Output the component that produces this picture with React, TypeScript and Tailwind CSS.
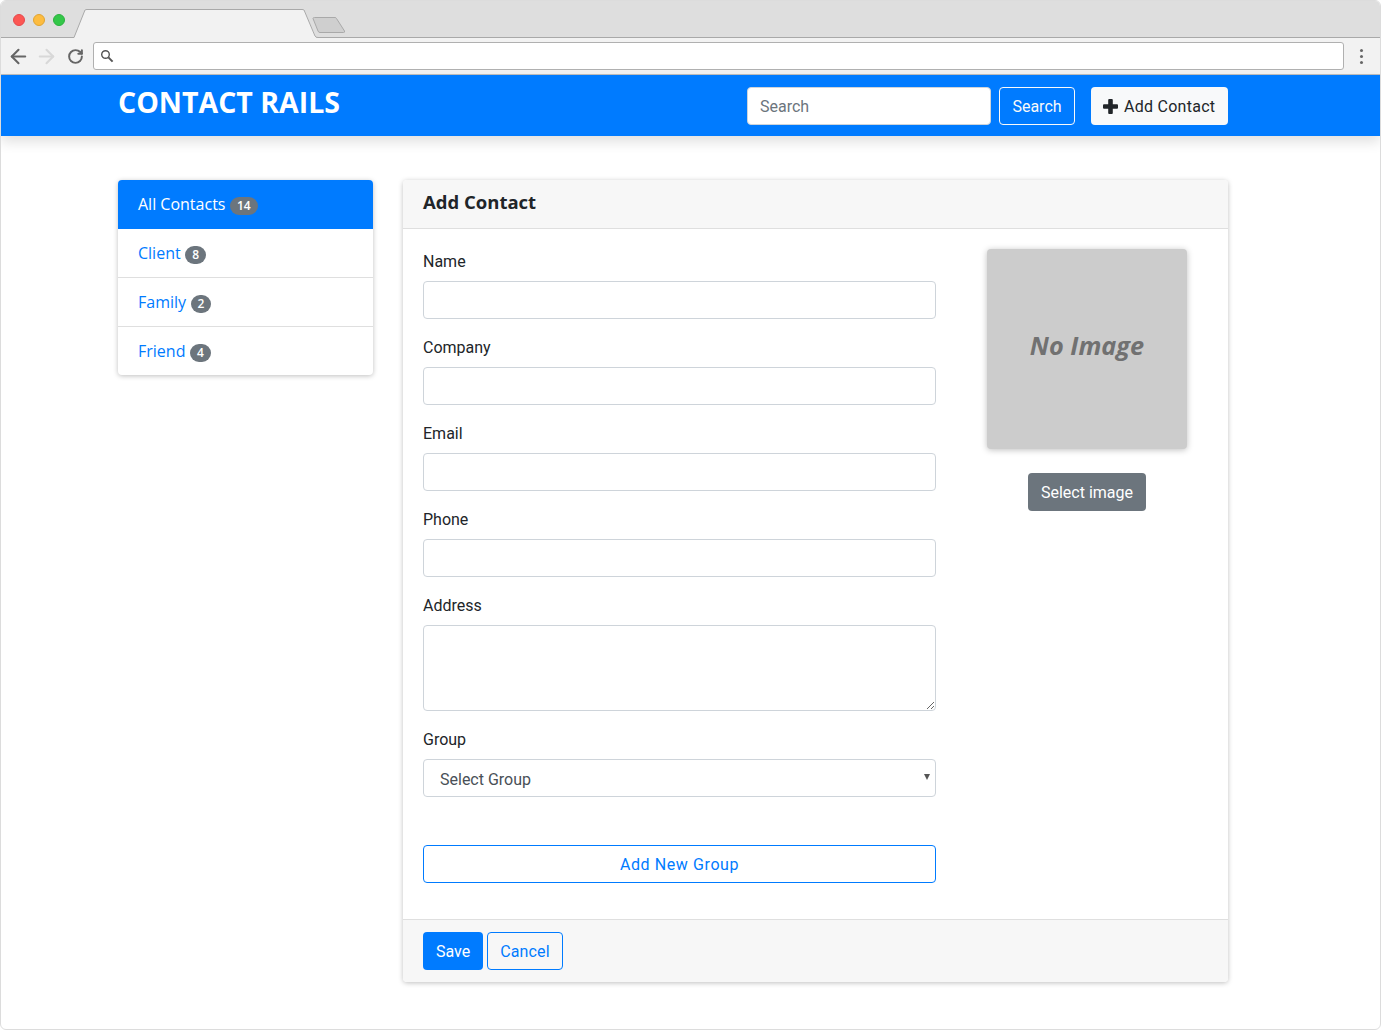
import { ArrowLeft, ArrowRight, RotateCw } from "lucide-react";

const groups = [
  { name: "Client", count: 8 },
  { name: "Family", count: 2 },
  { name: "Friend", count: 4 },
];

const fields = ["Name", "Company", "Email", "Phone"];

function Badge({ children }: { children: React.ReactNode }) {
  return (
    <span className="mt-[4px] ml-[4.5px] flex h-[18px] items-center rounded-full bg-[#6c757d] px-[7px] font-['Open_Sans',sans-serif] text-[12px] font-semibold text-white">
      {children}
    </span>
  );
}

function Label({ children }: { children: React.ReactNode }) {
  return <label className="mb-[8px] block pt-[1px] text-[16px] leading-[23px] text-[#212529]">{children}</label>;
}

function BrowserChrome() {
  return (
    <div className="shrink-0">
      <div className="relative h-[37px] border-b border-[#a9a9a9] bg-[#dedede]">
        <div className="flex gap-[8px] pt-[13px] pl-[12px]">
          <span className="size-[12px] rounded-full border border-[#e5484d] bg-[#fc5753]" />
          <span className="size-[12px] rounded-full border border-[#e0a431] bg-[#fdbc40]" />
          <span className="size-[12px] rounded-full border border-[#2bb03e] bg-[#33c748]" />
        </div>
        <svg className="absolute top-[7px] left-[71px]" width="276" height="31" viewBox="0 0 276 31" fill="none">
          <path d="M0 29.5 H2 L13 2 Q13.5 1.5 15 1.5 H230 Q231.5 1.5 232 2 L244 29.5 H246 V31 H0 Z" fill="#f2f2f2" />
          <path d="M0 29.5 H2 L13 2 Q13.5 1.5 15 1.5 H230 Q231.5 1.5 232 2 L243 28 Q244 29.5 246 29.5" stroke="#a9a9a9" />
          <path d="M241 10.5 Q241 9.5 242.5 9.5 H263 Q264 9.5 264.5 10.5 L272.5 23 Q273 24.5 271.5 24.5 H248 Q246.5 24.5 246 23 Z" fill="#cfcfcf" stroke="#a9a9a9" />
        </svg>
      </div>
      <div className="flex h-[37px] items-center border-b border-[#bdbdbd] bg-[#f2f2f2]">
        <ArrowLeft size={23} strokeWidth={2.2} className="ml-[6px] text-[#666]" />
        <ArrowRight size={23} strokeWidth={2.2} className="ml-[5px] text-[#d8d8d8]" />
        <RotateCw size={17} strokeWidth={2.8} className="ml-[9px] text-[#666]" />
        <div className="ml-[9px] flex h-[28px] w-[1251px] items-center rounded-[3px] border border-[#b0b0b0] bg-white pl-[6px]">
          <svg width="14" height="14" viewBox="0 0 14 14" fill="none" stroke="#555">
            <circle cx="5.5" cy="5.5" r="3.8" strokeWidth="1.4" />
            <path d="M8.4 8.4 L12.6 12.6" strokeWidth="2" />
          </svg>
        </div>
        <div className="ml-[16px] flex flex-col gap-[3px]">
          <span className="size-[3px] rounded-full bg-[#666]" />
          <span className="size-[3px] rounded-full bg-[#666]" />
          <span className="size-[3px] rounded-full bg-[#666]" />
        </div>
      </div>
    </div>
  );
}

function Navbar() {
  return (
    <header className="flex h-[61px] shrink-0 items-start bg-[#007bff] pr-[152px] pl-[117px] shadow-[0_6px_12px_rgba(0,0,0,0.12)]">
      <h1 className="mt-[8px] font-['Open_Sans',sans-serif] text-[28.5px] leading-[38px] font-bold text-white">
        CONTACT RAILS
      </h1>
      <div className="ml-auto flex pt-[12px]">
        <input
          placeholder="Search"
          className="h-[38px] w-[244px] rounded-[4px] border border-[#ced4da] bg-white px-[12px] text-[16px] text-[#495057] placeholder:text-[#6c757d]"
        />
        <button className="ml-[8px] h-[38px] w-[76px] rounded-[4px] border border-[#f8f9fa] pt-[1px] text-[16px] text-[#f8f9fa]">
          Search
        </button>
        <button className="ml-[16px] flex h-[38px] w-[137px] items-center rounded-[4px] bg-[#f8f9fa] pt-[1px] pl-[12px] text-[16px] tracking-[0.27px] text-[#212529]">
          <svg width="15" height="15" viewBox="0 0 15 15" className="mr-[6px]" fill="#212529">
            <rect x="5.2" y="0" width="4.6" height="15" rx="1" />
            <rect x="0" y="5.2" width="15" height="4.6" rx="1" />
          </svg>
          Add Contact
        </button>
      </div>
    </header>
  );
}

function Sidebar() {
  return (
    <aside className="h-[195px] w-[255px] shrink-0 overflow-hidden rounded-[4px] bg-white font-['Open_Sans',sans-serif] text-[16px] shadow-[0_1px_5px_rgba(0,0,0,0.25)]">
      <div className="flex h-[49px] items-center bg-[#007bff] pb-[2px] pl-[20px] text-white">
        All Contacts
        <Badge>14</Badge>
      </div>
      {groups.map((g, i) => (
        <div
          key={g.name}
          className={`flex items-center pl-[20px] text-[#007bff] ${i < 2 ? "h-[49px] border-b border-[#dfdfdf]" : "h-[48px]"}`}
        >
          {g.name}
          <Badge>{g.count}</Badge>
        </div>
      ))}
    </aside>
  );
}

function ContactForm() {
  const control = "mb-[16px] block h-[38px] w-full rounded-[4px] border border-[#ced4da] bg-white";
  return (
    <section className="ml-[30px] h-[802px] w-[825px] shrink-0 overflow-hidden rounded-[4px] bg-white shadow-[0_1px_5px_rgba(0,0,0,0.25)]">
      <div className="flex h-[49px] items-center border-b border-[#dfdfdf] bg-[#f7f7f7] pb-[5px] pl-[20px]">
        <h2 className="font-['Open_Sans',sans-serif] text-[18.5px] font-bold text-[#212529]">Add Contact</h2>
      </div>
      <div className="flex h-[691px] border-b border-[#dfdfdf] pt-[20px] pl-[20px]">
        <div className="w-[513px]">
          {fields.map((f) => (
            <div key={f}>
              <Label>{f}</Label>
              <input className={control} />
            </div>
          ))}
          <Label>Address</Label>
          <textarea className="mb-[16px] block h-[86px] w-full rounded-[4px] border border-[#ced4da] bg-white" />
          <Label>Group</Label>
          <div className="relative">
            <select className="block h-[38px] w-full appearance-none rounded-[4px] border border-[#ced4da] bg-white px-[16px] pt-[4px] text-[16px] text-[#495057]">
              <option>Select Group</option>
            </select>
            <span className="absolute top-[15px] right-[6px] size-0 border-x-[3px] border-t-[6px] border-x-transparent border-t-[#555]" />
          </div>
          <button className="mt-[48px] block h-[38px] w-full rounded-[4px] border border-[#007bff] pt-[1px] text-[16px] tracking-[0.6px] text-[#007bff]">
            Add New Group
          </button>
        </div>
        <div className="ml-[51px] flex w-[200px] flex-col items-center">
          <div className="flex size-[200px] items-center justify-center rounded-[4px] bg-[#cccccc] pb-[6px] font-['Open_Sans',sans-serif] text-[25.3px] font-bold text-[#717171] italic shadow-[0_1px_6px_rgba(0,0,0,0.25)]">
            No Image
          </div>
          <button className="mt-[24px] h-[38px] w-[118px] rounded-[4px] bg-[#6c757d] pt-[1px] text-[16px] text-white">
            Select image
          </button>
        </div>
      </div>
      <div className="flex h-[62px] items-center gap-[4px] bg-[#f7f7f7] pl-[20px]">
        <button className="h-[38px] w-[60px] rounded-[4px] bg-[#007bff] pt-[1px] text-[16px] text-white">Save</button>
        <button className="h-[38px] w-[76px] rounded-[4px] border border-[#007bff] pt-[1px] text-[16px] tracking-[0.15px] text-[#007bff]">
          Cancel
        </button>
      </div>
    </section>
  );
}

export default function App() {
  return (
    <div className="flex h-[1030px] w-[1381px] flex-col overflow-hidden rounded-[6px] border border-[#dcdcdc] bg-white font-['Roboto',sans-serif]">
      <BrowserChrome />
      <Navbar />
      <main className="flex pt-[44px] pl-[117px]">
        <Sidebar />
        <ContactForm />
      </main>
    </div>
  );
}
